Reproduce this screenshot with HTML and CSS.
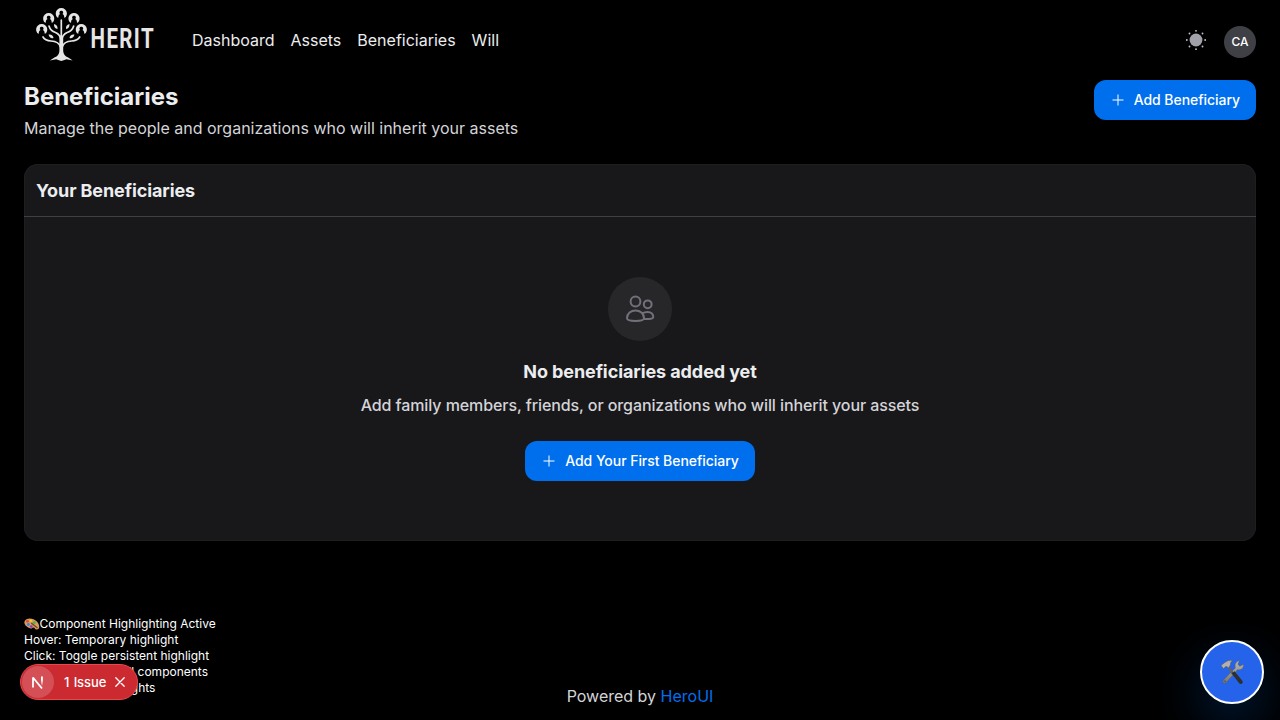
FILE: index.html
```html
<!DOCTYPE html>
<html lang="en">
<head>
<meta charset="utf-8">
<title>Beneficiaries</title>
<link rel="stylesheet" href="styles.css">
</head>
<body>
<svg width="0" height="0" class="defs">
  <defs>
    <g id="person">
      <path d="M-4.500 3.600A5.600 5.600 0 1 1 4.500 3.600L3.300 4.300H-3.300z"/>
      <path d="M0-2.700A1.800 1.800 0 0 1 1.100.6Q3 1.200 3 4.600H-3Q-3 1.200-1.100.6A1.800 1.800 0 0 1 0-2.700z" fill="#000"/>
    </g>
  </defs>
</svg>
<div class="page">
  <header class="nav">
    <svg class="logo" width="124" height="60" viewBox="34 4 124 60">
      <g fill="#e6e6e6">
        <use href="#person" x="61.3" y="13.4"/>
        <use href="#person" x="48.7" y="18.4"/>
        <use href="#person" x="74" y="18.4"/>
        <use href="#person" x="41.7" y="29.4"/>
        <use href="#person" x="81.3" y="29.4"/>
        <path d="M59.4 37h3.8v14q.2 4.500 5 6.600l4.500 2.900-6.300-1.300-2 .8-3.100 1-3.100-1-2-.8-6.300 1.300 4.500-2.900q4.800-2.100 5-6.600z"/>
        <path d="M54 24q4 1 3.500 5-3.700-.5-3.500-5zM69.500 24q-4 1-3.500 5 3.700-.5 3.500-5zM48.500 34.500q4.500-.5 5 3.500-3.500 1.200-5-3.500zM74.500 34.500q-4.500-.5-5 3.500 3.500 1.200 5-3.500z"/>
      </g>
      <g fill="none" stroke="#e6e6e6" stroke-width="1.700" stroke-linecap="round">
        <path d="M61.300 20v20M49 26q1.500 5 6.500 6.500 5 2 5.500 8M73.700 26q-1.500 5-6.500 6.500-5 2-5.500 8M43 37q2 3.500 8 4 8 .5 9.500 6M79.700 37q-2 3.500-8 4-8 .5-9.500 6"/>
      </g>
      <text class="logo-text" transform="translate(90.600 48) scale(.76 1)">HERIT</text>
    </svg>
    <nav class="links"><a>Dashboard</a><a>Assets</a><a>Beneficiaries</a><a>Will</a></nav>
    <div class="tools">
      <svg class="sun" width="22" height="22" viewBox="0 0 24 24" fill="#a1a1aa"><circle cx="12" cy="12" r="7"/><g fill="#c0c0c8"><circle cx="12" cy="2" r="1"/><circle cx="12" cy="22" r="1"/><circle cx="2" cy="12" r="1"/><circle cx="22" cy="12" r="1"/><circle cx="4.900" cy="4.900" r="1"/><circle cx="19.100" cy="4.900" r="1"/><circle cx="4.900" cy="19.100" r="1"/><circle cx="19.100" cy="19.100" r="1"/></g></svg>
      <span class="avatar">CA</span>
    </div>
  </header>
  <main class="main">
    <section class="heading">
      <div>
        <h1>Beneficiaries</h1>
        <p>Manage the people and organizations who will inherit your assets</p>
      </div>
      <button class="btn"><svg width="14" height="14" viewBox="0 0 14 14"><path d="M1.500 7h11M7 1.500v11"/></svg>Add Beneficiary</button>
    </section>
    <section class="card">
      <h2 class="card-head">Your Beneficiaries</h2>
      <div class="empty">
        <div class="circle">
          <svg width="32" height="32" viewBox="0 0 32 32" fill="none" stroke="#71717a" stroke-width="2"><circle cx="11.500" cy="8.500" r="4.900"/><circle cx="23.700" cy="11.300" r="3.900"/><path d="M3 25.300C3 20.500 7 17.500 11.500 17.500S20 20.500 20 25.300C20 27 18 28 11.500 28S3 27 3 25.300zM18.300 20.300Q20.500 18.900 23.500 18.900C27.500 18.900 29.300 21.500 29.300 24.300Q29.300 26.300 20 26.100"/></svg>
        </div>
        <h3>No beneficiaries added yet</h3>
        <p>Add family members, friends, or organizations who will inherit your assets</p>
        <button class="btn"><svg width="14" height="14" viewBox="0 0 14 14"><path d="M1.500 7h11M7 1.500v11"/></svg>Add Your First Beneficiary</button>
      </div>
    </section>
  </main>
  <footer class="footer">Powered by <a>HeroUI</a></footer>
</div>
<aside class="hints">
  <div class="hint-title"><svg width="15.500" height="12" viewBox="0 0 15 12" preserveAspectRatio="none"><path d="M1 2.500C3-.5 9-.2 12.500 3.500 15.500 7 15.500 11 12.500 11.500 10.500 12 10.800 9.500 9 9.500 7.500 9.500 8 11 6.500 10.500 2 9-1 5.500 1 2.500z" fill="#d99a5b"/><circle cx="3.400" cy="3.300" r="1.400" fill="#e9453b"/><circle cx="6.700" cy="2.700" r="1.300" fill="#f6c928"/><circle cx="10" cy="4.600" r="1.400" fill="#43b649"/><circle cx="4.200" cy="6.500" r="1.400" fill="#278ee8"/><circle cx="7" cy="8.500" r="1.300" fill="#8738ca"/><path d="M7 5l6 5" stroke="#654126"/></svg>Component Highlighting Active</div>
  <div>Hover: Temporary highlight</div>
  <div>Click: Toggle persistent highlight</div>
  <div class="hint-all">Alt+H: Highlight all components</div>
  <div>Esc: Clear all highlights</div>
</aside>
<div class="issue">
  <span class="mark"><svg width="18" height="18" viewBox="0 0 18 18" fill="none"><defs><linearGradient id="fade" x1="0" y1="0" x2="0" y2="1"><stop offset=".35" stop-color="#fff"/><stop offset="1" stop-color="#fff" stop-opacity="0"/></linearGradient></defs><path d="M4 14.500V4.500l9 11" stroke="#fff" stroke-width="1.800" stroke-linejoin="bevel"/><path d="M12 3.500h1.900v9.500H12z" fill="url(#fade)"/></svg></span>
  <span class="issue-text">1 Issue</span>
  <svg width="10" height="10" viewBox="0 0 10 10" stroke="#fff" stroke-width="1.300" stroke-linecap="round"><path d="M.8.8l8.400 8.400M9.200.8L.8 9.200"/></svg>
</div>
<div class="fab">
  <svg width="24" height="26" viewBox="0 0 24 26"><defs><linearGradient id="steel" x1="0" y1="0" x2="0" y2="1"><stop offset="0" stop-color="#b9b9b9"/><stop offset="1" stop-color="#777"/></linearGradient></defs><path d="M17 2.500l2.500-1.300-1.500 4 1.700 2 3.800-2q.5 4-2.700 5.300-1.700.7-3.300.2L7 22.700q-2 2.500-3.600 1.300-1.500-1.300.5-3.500L15.200 9q-1-4 1.800-6.500z" fill="url(#steel)" stroke="#555" stroke-width=".5"/><circle cx="5" cy="22.200" r=".9" fill="#555"/><path d="M9 8.500l4 6.500" stroke="#626262" stroke-width="2.400"/><path d="M11.500 14.200l3-2L22.500 22q1 2-1 2.900-1.500.3-2.500-1z" fill="#2d302f"/><path d="M1 6.500l3-2.500Q8 .3 13 1.800q-3 1-2.500 4L8.500 9 6 7.200 3.500 9.800z" fill="#b0b0b0" stroke="#505050" stroke-width=".5"/></svg>
</div>
</body>
</html>
```

FILE: styles.css
```css
* { box-sizing: border-box; margin: 0; }
body { background: #000; color: #ecedee; font-family: Inter, "Noto Sans", sans-serif; font-size: 16px; line-height: 24px; overflow: hidden; }
.defs { position: absolute; }
.page { height: 720px; display: flex; flex-direction: column; }
.nav { height: 80px; padding: 4px 24px 0 34px; display: flex; align-items: flex-start; }
.logo { flex: none; overflow: visible; }
.logo-text { font-family: Roboto, sans-serif; font-size: 27px; font-weight: 700; fill: #e6e6e6; letter-spacing: 1.8px; }
.links { display: flex; gap: 16px; margin: 24px 0 0 34px; }
.tools { display: flex; align-items: center; gap: 17px; margin: 22px 0 0 auto; }
.sun { margin-bottom: 4px; }
.avatar { width: 32px; height: 32px; border-radius: 50%; background: #3f3f46; font-size: 12px; line-height: 32px; text-align: center; font-weight: 500; color: #fff; }
.main { flex: 1; padding: 0 24px; }
.heading { display: flex; justify-content: space-between; align-items: flex-start; height: 84px; }
h1 { font-size: 24px; line-height: 32px; padding-top: 1px; height: 32px; font-weight: 700; }
.heading p { line-height: 24px; margin-top: 4px; color: #d4d4d8; }
.btn { height: 40px; border: 0; border-radius: 12px; padding: 0 16px; display: inline-flex; align-items: center; gap: 8px; background: #006fee; color: #fff; font: 500 14px/20px Inter, sans-serif; letter-spacing: -.05px; }
.btn svg { width: 16px; fill: none; stroke: #fff; stroke-width: 1; }
.card { height: 377px; border-radius: 14px; background: #18181b; box-shadow: inset 0 0 0 1px #1e1e21; }
.card-head { height: 53px; padding: 13px 12px 11px; border-bottom: 1px solid #3f3f46; font-size: 18px; line-height: 28px; font-weight: 700; letter-spacing: -.1px; }
.empty { display: flex; flex-direction: column; align-items: center; padding-top: 60px; }
.circle { width: 64px; height: 64px; border-radius: 50%; background: #27272a; display: grid; place-items: center; }
h3 { font-size: 18px; line-height: 28px; font-weight: 700; letter-spacing: -.09px; margin: 17px 0 7px; }
.empty p { margin-bottom: 24px; color: #d4d4d8; font-weight: 500; letter-spacing: -.09px; }
.footer { height: 48px; padding-top: 12px; text-align: center; color: #d4d4d8; }
.footer a { color: #006fee; }
.hints { position: absolute; left: 24px; top: 616px; font-size: 12px; line-height: 16px; color: #fff; white-space: nowrap; }
.hint-title { display: flex; align-items: center; }
.hint-all { width: 184px; text-align: right; }
.issue { position: absolute; left: 20px; top: 664px; width: 118px; height: 36px; padding-left: 1px; display: flex; align-items: center; border-radius: 18px; background: #ca2a30; border: 1px solid #e5484d; color: #fff; }
.mark { width: 32px; height: 32px; border-radius: 50%; background: #d45056; display: grid; place-items: center; }
.issue-text { margin: 0 9px 0 10px; font-size: 13px; font-weight: 500; word-spacing: 1px; letter-spacing: -.1px; }
.fab { position: absolute; left: 1200px; top: 640px; width: 64px; height: 64px; border-radius: 50%; border: 2px solid #fff; background: #2563eb; display: grid; place-items: center; box-shadow: 0 20px 50px rgba(0, 111, 238, .25); }
```
